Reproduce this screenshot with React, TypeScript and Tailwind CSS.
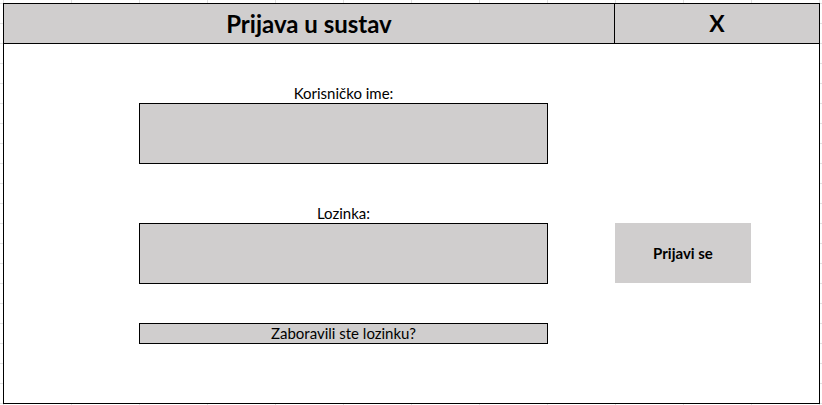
export default function App() {
  // pozadina imitira mrežu ćelija iz tablice
  return (
    <div
      className="w-[822px] h-[405px] pl-[3px] pt-[3px] bg-white bg-[linear-gradient(to_right,#e1e1e1_1px,transparent_1px),linear-gradient(to_bottom,#e1e1e1_1px,transparent_1px)] bg-[size:68px_20px] bg-[position:3px_3px] text-black"
      style={{ fontFamily: "Lato, 'Open Sans', sans-serif" }}
    >
      <div className="w-[817px] h-[401px] border border-black bg-white flex flex-col">
        {/* Zaglavlje */}
        <div className="flex h-[40px] border-b border-black bg-[#d0cece] shrink-0">
          <div className="w-[611px] border-r border-black flex items-center justify-center text-[24px] font-bold">
            Prijava u sustav
          </div>
          <div className="flex-1 flex items-center justify-center text-[23px] font-bold">
            X
          </div>
        </div>

        {/* Tijelo obrasca */}
        <div className="flex pl-[135px] pt-[39px]">
          <div className="w-[409px] flex flex-col">
            <label className="h-[20px] leading-[20px] text-center text-[15px]">
              Korisničko ime:
            </label>
            <div className="h-[61px] border border-black bg-[#d0cece]" />

            <label className="mt-[39px] h-[20px] leading-[20px] text-center text-[15px]">
              Lozinka:
            </label>
            <div className="h-[61px] border border-black bg-[#d0cece]" />

            <button className="mt-[39px] h-[21px] border border-black bg-[#d0cece] text-[15px] leading-[19px] text-center">
              Zaboravili ste lozinku?
            </button>
          </div>

          <div className="ml-[67px] pt-[140px]">
            <button className="w-[136px] h-[60px] bg-[#d0cece] text-[15px] font-bold">
              Prijavi se
            </button>
          </div>
        </div>
      </div>
    </div>
  );
}
